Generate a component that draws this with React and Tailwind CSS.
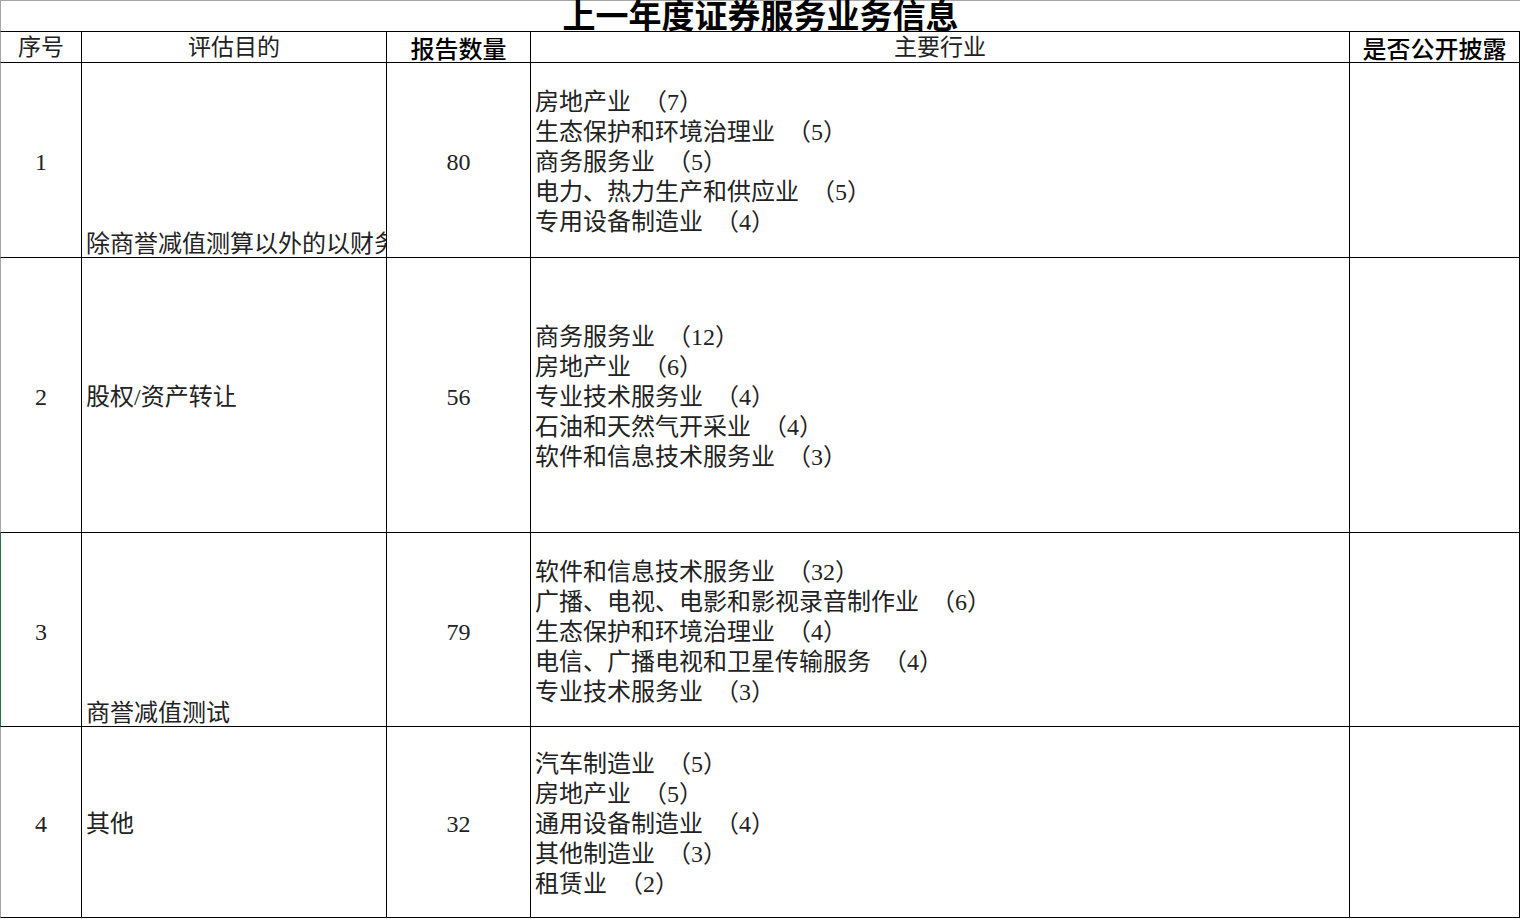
import React from "react";

const serif = "font-['Liberation_Serif','Noto_Sans_CJK_SC',serif]";

const rows = [
  {
    no: "1",
    purpose: "除商誉减值测算以外的以财务报告为目的的评估",
    bottom: true,
    count: "80",
    industries: [
      ["房地产业", 7],
      ["生态保护和环境治理业", 5],
      ["商务服务业", 5],
      ["电力、热力生产和供应业", 5],
      ["专用设备制造业", 4],
    ],
  },
  {
    no: "2",
    purpose: "股权/资产转让",
    bottom: false,
    count: "56",
    industries: [
      ["商务服务业", 12],
      ["房地产业", 6],
      ["专业技术服务业", 4],
      ["石油和天然气开采业", 4],
      ["软件和信息技术服务业", 3],
    ],
  },
  {
    no: "3",
    purpose: "商誉减值测试",
    bottom: true,
    count: "79",
    selected: true,
    industries: [
      ["软件和信息技术服务业", 32],
      ["广播、电视、电影和影视录音制作业", 6],
      ["生态保护和环境治理业", 4],
      ["电信、广播电视和卫星传输服务", 4],
      ["专业技术服务业", 3],
    ],
  },
  {
    no: "4",
    purpose: "其他",
    bottom: false,
    count: "32",
    industries: [
      ["汽车制造业", 5],
      ["房地产业", 5],
      ["通用设备制造业", 4],
      ["其他制造业", 3],
      ["租赁业", 2],
    ],
  },
];

export default function App() {
  return (
    <div className="w-[1521px] h-[919px] bg-white overflow-hidden text-[#222]">
      <div className="grid grid-cols-[82px_305px_144px_819px_170px] grid-rows-[32px_31px_195px_275px_194px_191px]">
        {/* 标题行 */}
        <div className="col-span-5 flex items-center justify-center border-t border-l border-t-[#a6a6a6] border-l-[#a6a6a6] border-b border-b-black">
          <span className="font-['Noto_Sans_CJK_SC',sans-serif] font-bold text-[33px] leading-[30px] text-black -translate-y-[2px]">
            上一年度证券服务业务信息
          </span>
        </div>

        {/* 表头 */}
        <div className={`flex items-center justify-center pt-[2px] border-l border-l-[#a6a6a6] border-r border-b border-r-black border-b-black text-[23px] leading-[28px] ${serif}`}>
          序号
        </div>
        <div className={`flex items-center justify-center pt-[2px] border-r border-b border-black text-[23px] leading-[28px] ${serif}`}>
          评估目的
        </div>
        <div className="flex items-center justify-center pt-[1px] border-r border-b border-black text-[24px] leading-[28px] font-medium text-black font-['Noto_Sans_CJK_SC',sans-serif]">
          报告数量
        </div>
        <div className={`flex items-center justify-center pt-[2px] border-r border-b border-black text-[23px] leading-[28px] ${serif}`}>
          主要行业
        </div>
        <div className="flex items-center justify-center pt-[1px] border-r border-b border-black text-[24px] leading-[28px] font-medium text-black font-['Noto_Sans_CJK_SC',sans-serif]">
          是否公开披露
        </div>

        {/* 数据行 */}
        {rows.map((r) => (
          <React.Fragment key={r.no}>
            <div
              className={`flex items-center justify-center pt-[4px] border-l border-r border-b border-r-black border-b-black text-[24px] ${serif} ${
                r.selected ? "border-l-[#217346]" : "border-l-[#a6a6a6]"
              }`}
            >
              {r.no}
            </div>
            <div
              className={`flex pl-[4px] border-r border-b border-black overflow-hidden whitespace-nowrap text-[24px] ${serif} ${
                r.bottom ? "items-end leading-[26px]" : "items-center pt-[4px] leading-[30px]"
              }`}
            >
              {r.purpose}
            </div>
            <div className={`flex items-center justify-center pt-[4px] border-r border-b border-black text-[24px] ${serif}`}>
              {r.count}
            </div>
            <div className={`flex flex-col justify-center pl-[4px] pt-[4px] border-r border-b border-black text-[24px] leading-[30px] whitespace-nowrap ${serif}`}>
              {r.industries.map(([name, n]) => (
                <div key={name}>
                  {name}
                  {"\u2002"}（{n}）
                </div>
              ))}
            </div>
            <div className="border-r border-b border-black" />
          </React.Fragment>
        ))}
      </div>
    </div>
  );
}
